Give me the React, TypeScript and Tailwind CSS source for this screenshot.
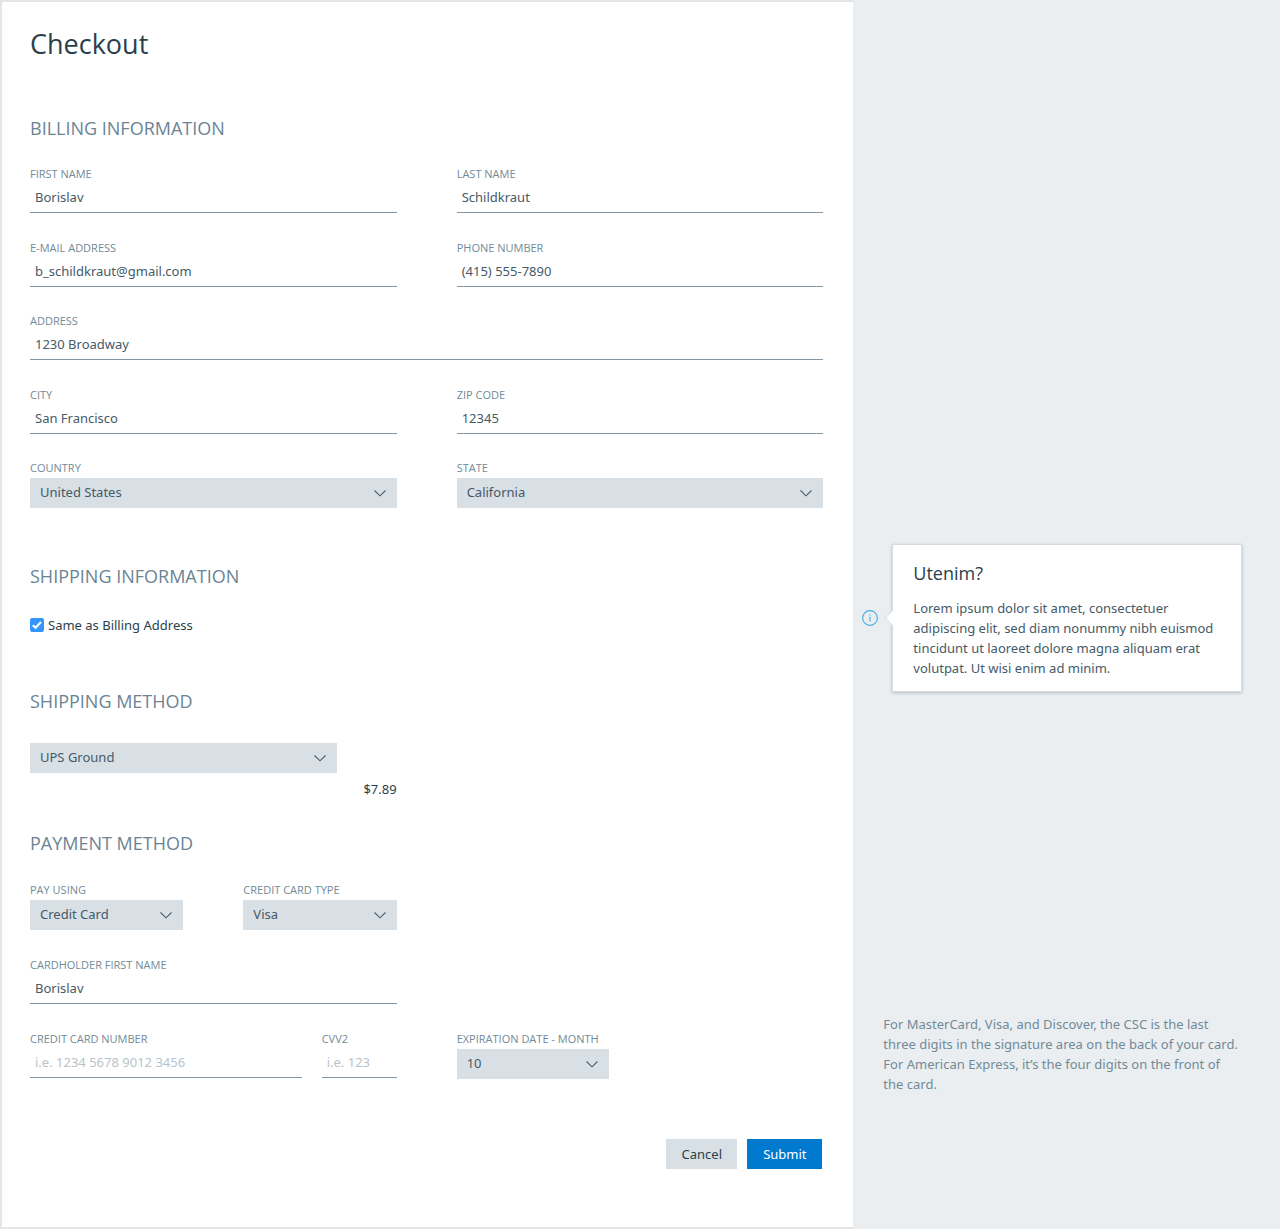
import { useId, type ReactNode } from "react";

function Chevron() {
  return (
    <svg
      className="pointer-events-none absolute top-1/2 right-[11px] h-2 w-3 -translate-y-1/2 text-[#455d6b]"
      viewBox="0 0 12 8"
      fill="none"
      stroke="currentColor"
      strokeWidth="1.1"
      aria-hidden="true"
    >
      <path d="M0.5 1.5 L6 6.8 L11.5 1.5" />
    </svg>
  );
}

function Label({ htmlFor, children }: { htmlFor: string; children: ReactNode }) {
  return (
    <label htmlFor={htmlFor} className="block font-['Open_Sans',sans-serif] text-[11px] leading-4 whitespace-nowrap text-[#728a98]">
      {children}
    </label>
  );
}

function TextField({ label, value, placeholder, type = "text" }: { label: string; value?: string; placeholder?: string; type?: string }) {
  const id = useId();
  return (
    <div className="min-w-0">
      <Label htmlFor={id}>{label}</Label>
      <input
        id={id}
        type={type}
        defaultValue={value}
        placeholder={placeholder}
        className="block h-[31px] w-full rounded-none border-b border-[#8298a6] bg-transparent px-[5px] text-[13px] text-[#455a68] outline-none placeholder:text-[#b8c3cb] focus:border-[#007ace]"
      />
    </div>
  );
}

function SelectField({ label, hiddenLabel, options }: { label?: string; hiddenLabel?: string; options: string[] }) {
  const id = useId();
  return (
    <div className="min-w-0">
      {label && (
        <div className="mb-0.5">
          <Label htmlFor={id}>{label}</Label>
        </div>
      )}
      <div className="relative">
        <select
          id={id}
          aria-label={hiddenLabel}
          defaultValue={options[0]}
          className="block h-[30px] w-full appearance-none rounded-none bg-[#d8dfe5] pr-8 pb-0.5 pl-2.5 text-[13px] text-[#455a68] outline-none"
        >
          {options.map((o) => (
            <option key={o}>{o}</option>
          ))}
        </select>
        <Chevron />
      </div>
    </div>
  );
}

function SectionTitle({ children }: { children: ReactNode }) {
  return <h2 className="font-['Open_Sans',sans-serif] text-[18px] leading-6 text-[#6b8494]">{children}</h2>;
}

function InfoIcon() {
  return (
    <svg className="size-4 shrink-0" viewBox="0 0 16 16" fill="none" aria-hidden="true">
      <circle cx="8" cy="8" r="7.4" stroke="#45ace6" strokeWidth="1.1" />
      <path d="M8 6.8V11.6" stroke="#45ace6" strokeWidth="1.2" />
      <path d="M8 4.4V5.6" stroke="#45ace6" strokeWidth="1.2" />
    </svg>
  );
}

export default function App() {
  return (
    <div className="flex min-h-screen bg-[#eaeef1] font-['Noto_Sans','Open_Sans',sans-serif] text-[13px] leading-5">
      <main className="w-2/3 border-y-2 border-l-2 border-[#e5e5e5] bg-white pr-[30px] pl-7">
        <form onSubmit={(e) => e.preventDefault()}>
          <h1 className="mt-6 font-['Open_Sans',sans-serif] text-[27px] leading-9 text-[#2a3f4d]">Checkout</h1>

          <section className="mt-[54px]">
            <SectionTitle>BILLING INFORMATION</SectionTitle>
            <div className="mt-[26px] grid grid-cols-2 gap-x-15 gap-y-[27px]">
              <TextField label="FIRST NAME" value="Borislav" />
              <TextField label="LAST NAME" value="Schildkraut" />
              <TextField label="E-MAIL ADDRESS" type="email" value="b_schildkraut@gmail.com" />
              <TextField label="PHONE NUMBER" type="tel" value="(415) 555-7890" />
            </div>
            <div className="mt-[26px] grid grid-cols-2 gap-x-15 gap-y-[27px]">
              <div className="col-span-2">
                <TextField label="ADDRESS" value="1230 Broadway" />
              </div>
              <TextField label="CITY" value="San Francisco" />
              <TextField label="ZIP CODE" value="12345" />
            </div>
            <div className="mt-[26px] grid grid-cols-2 gap-x-15">
              <SelectField label="COUNTRY" options={["United States", "Canada", "Mexico"]} />
              <SelectField label="STATE" options={["California", "Nevada", "Oregon"]} />
            </div>
          </section>

          <section className="mt-14">
            <SectionTitle>SHIPPING INFORMATION</SectionTitle>
            <label className="mt-[27px] flex items-center gap-1 text-[#2a3f4d]">
              <span className="relative size-3.5 shrink-0">
                <input type="checkbox" defaultChecked className="peer block size-3.5 appearance-none rounded-xs border border-[#8298a6] checked:border-[#3596fd] checked:bg-[#3596fd]" />
                <svg className="pointer-events-none absolute inset-0 hidden size-3.5 peer-checked:block" viewBox="0 0 14 14" fill="none" stroke="#fff" strokeWidth="2.2" aria-hidden="true">
                  <path d="M2.8 7.2 L5.6 9.8 L11 4" />
                </svg>
              </span>
              Same as Billing Address
            </label>
          </section>

          <section className="mt-[54px]">
            <SectionTitle>SHIPPING METHOD</SectionTitle>
            <div className="mt-[30px] grid grid-cols-2 gap-x-15">
              <div>
                <div className="pr-15">
                  <SelectField hiddenLabel="Shipping method" options={["UPS Ground", "UPS 2nd Day Air"]} />
                </div>
                <p className="mt-1.5 text-right text-[#2a3f4d]">$7.89</p>
              </div>
            </div>
          </section>

          <section className="mt-8">
            <SectionTitle>PAYMENT METHOD</SectionTitle>
            <div className="mt-[27px] grid grid-cols-2 gap-x-15 gap-y-[27px]">
              <div className="grid grid-cols-2 gap-x-15">
                <SelectField label="PAY USING" options={["Credit Card", "PayPal"]} />
                <SelectField label="CREDIT CARD TYPE" options={["Visa", "MasterCard", "Discover"]} />
              </div>
              <div className="col-start-1">
                <TextField label="CARDHOLDER FIRST NAME" value="Borislav" />
              </div>
              <div className="col-start-1 flex gap-5">
                <div className="flex-1">
                  <TextField label="CREDIT CARD NUMBER" placeholder="i.e. 1234 5678 9012 3456" />
                </div>
                <div className="w-[75px]">
                  <TextField label="CVV2" placeholder="i.e. 123" />
                </div>
              </div>
              <div className="w-[152px]">
                <SelectField label="EXPIRATION DATE - MONTH" options={["10", "11", "12"]} />
              </div>
            </div>
          </section>

          <div className="mt-15 mb-[58px] flex justify-end gap-2.5 pr-px">
            <button type="button" className="h-[30px] w-[71px] bg-[#d8dfe5] text-[#2a3f4d]">
              Cancel
            </button>
            <button type="submit" className="h-[30px] w-[75px] bg-[#007ace] text-white">
              Submit
            </button>
          </div>
        </form>
      </main>

      <aside className="flex-1 pt-[544px] pr-[38px]">
        <div className="flex items-center gap-3.5 pl-[9px]">
          <button type="button" aria-label="More information">
            <InfoIcon />
          </button>
          <div className="relative flex-1 border border-[#d5dce1] bg-white px-5 pt-4 pb-[13px] shadow-[0_1px_3px_rgba(60,80,95,0.3)]">
            <svg className="absolute top-1/2 -left-2 h-4 w-2 -translate-y-1/2" viewBox="0 0 8 16" aria-hidden="true">
              <path d="M8 0 L0.5 8 L8 16 Z" fill="#fff" />
              <path d="M8 0 L0.5 8 L8 16" fill="none" stroke="#d5dce1" />
            </svg>
            <h3 className="font-['Open_Sans',sans-serif] text-[18px] leading-6 text-[#2a3f4d]">Utenim?</h3>
            <p className="mt-[13px] text-[#455a68]">
              Lorem ipsum dolor sit amet, consectetuer adipiscing elit, sed diam nonummy nibh euismod tincidunt ut laoreet dolore magna aliquam erat volutpat. Ut wisi enim ad minim.
            </p>
          </div>
        </div>
        <p className="mt-[322px] pl-[30px] text-[#728a98]">
          For MasterCard, Visa, and Discover, the CSC is the last three digits in the signature area on the back of your card. For American Express, it’s the four digits on the front of the card.
        </p>
      </aside>
    </div>
  );
}
